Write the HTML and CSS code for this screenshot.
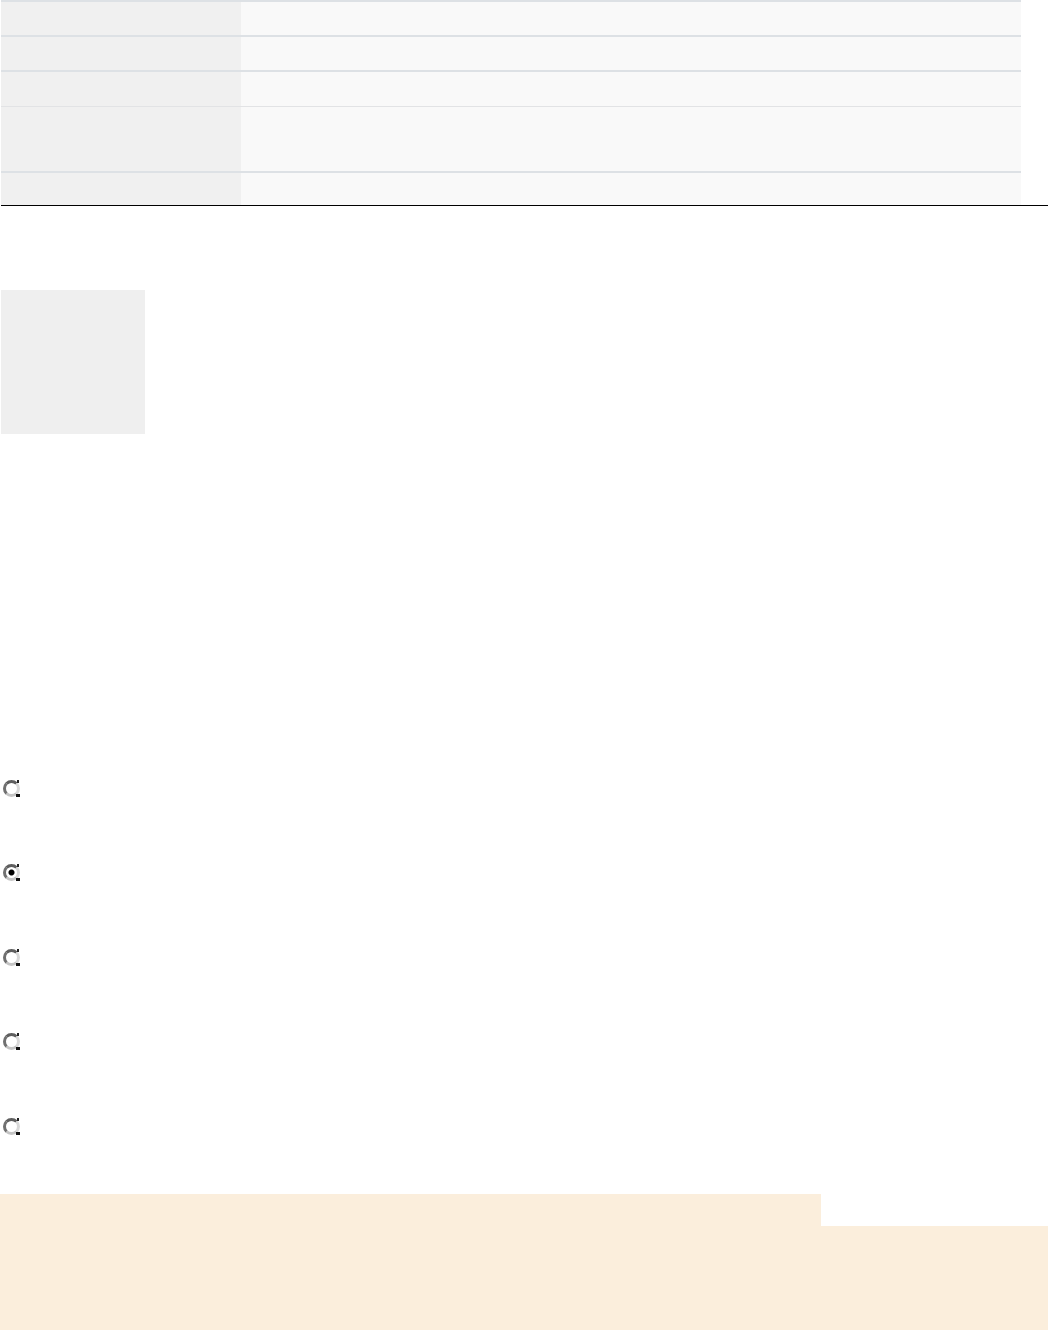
FILE: index.html
```html
<!DOCTYPE html>
<html lang="en">
<head>
<meta charset="utf-8">
<title>Page</title>
<link rel="stylesheet" href="styles.css">
</head>
<body>
<div class="spec">
  <div class="cell key r1"></div><div class="cell val r1"></div>
  <div class="cell key r2"></div><div class="cell val r2"></div>
  <div class="cell key r3"></div><div class="cell val r3"></div>
  <div class="cell key r4"></div><div class="cell val r4"></div>
  <div class="cell key r5"></div><div class="cell val r5"></div>
</div>
<div class="rule"></div>
<div class="swatch"></div>
<div class="options">
  <label class="option"><input type="radio" name="opt" class="radio"></label>
  <label class="option"><input type="radio" name="opt" class="radio" checked></label>
  <label class="option"><input type="radio" name="opt" class="radio"></label>
  <label class="option"><input type="radio" name="opt" class="radio"></label>
  <label class="option"><input type="radio" name="opt" class="radio"></label>
</div>
<div class="note">
  <div class="note-head"></div>
  <div class="note-body"></div>
</div>
</body>
</html>
```

FILE: styles.css
```css
html, body {
  margin: 0;
  padding: 0;
  background: #ffffff;
  font-family: "Liberation Sans", Arial, sans-serif;
}

.spec {
  display: grid;
  grid-template-columns: 240px 780px;
  margin-left: 1px;
}

.cell {
  box-sizing: border-box;
  border-top: 2px solid #dde1e5;
}

.key { background: #f0f0f0; }
.val { background: #f9f9f9; }

.r1 { height: 35px; }
.r2 { height: 35px; }
.r3 { height: 36px; }
.r4 { height: 65px; border-top: 1px solid #e2e3e5; }
.r5 { height: 34px; }

.rule {
  height: 1px;
  background: #000000;
  margin-left: 1px;
}

.swatch {
  width: 144px;
  height: 144px;
  margin: 84px 0 0 1px;
  background: #efefef;
}

.options {
  margin-top: 312px;
  display: flex;
  flex-direction: column;
}

.option {
  height: 84.5px;
  display: flex;
  align-items: center;
  padding-left: 3px;
}

.radio {
  -webkit-appearance: none;
  appearance: none;
  position: relative;
  box-sizing: border-box;
  width: 17px;
  height: 17px;
  margin: 0;
  border-radius: 50%;
  border: 3px solid;
  border-color: #5e5e5e #d8d8d8 #c4c4c4 #707070;
  background: #ffffff;
}

.radio::after {
  content: "";
  position: absolute;
  right: -3px;
  bottom: -3px;
  width: 4px;
  height: 3px;
  background: #111;
}

.radio::before {
  content: "";
  position: absolute;
  right: -2px;
  top: -3px;
  width: 2px;
  height: 3px;
  background: #222;
}

.radio:checked {
  background: radial-gradient(circle at center, #000 0 2.5px, #fff 3.5px);
}

.note {
  margin-top: 25.5px;
}

.note-head {
  width: 821px;
  height: 32px;
  background: #fbeedc;
}

.note-body {
  height: 104px;
  background: #fbeedc;
}
```
